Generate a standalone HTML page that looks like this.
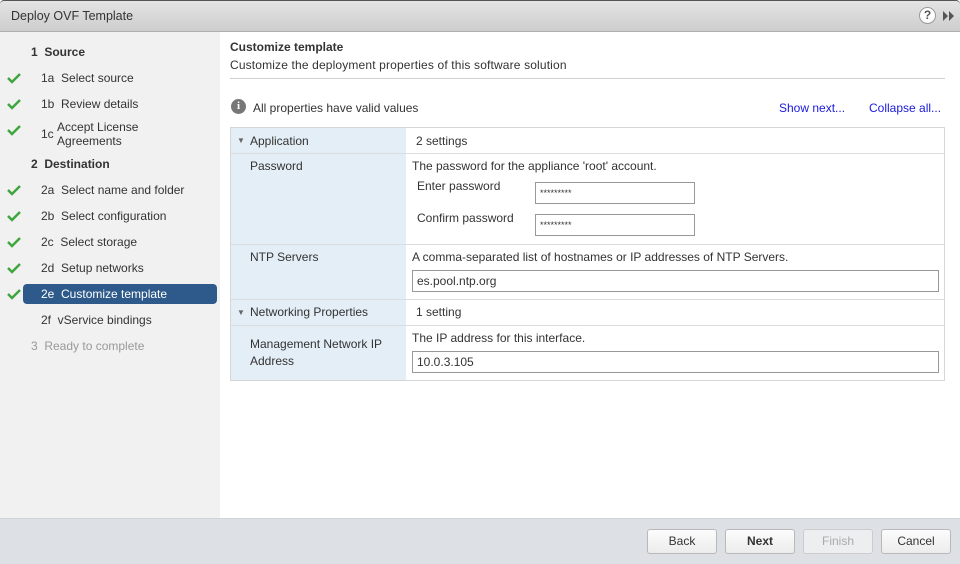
<!DOCTYPE html><html><head><style>
*{box-sizing:border-box;margin:0;padding:0}
body{width:960px;height:564px;overflow:hidden;font-family:"Liberation Sans",sans-serif;font-size:12px;color:#333;background:#fff;position:relative}
.abs{position:absolute}
.title{left:0;top:0;width:960px;height:32px;background:linear-gradient(#e4e4e4,#cdcdcd);border-bottom:1px solid #b0b0b0;border-top:1px solid #555;border-radius:4px 4px 0 0}
.left{left:0;top:32px;width:220px;height:486px;background:#f1f1f1}
.nav{position:absolute;left:0;height:20px;line-height:20px;font-size:12px;color:#333}
.chk{position:absolute;left:7px;width:14px;height:12px}
.foot{left:0;top:518px;width:960px;height:46px;background:#dde1e6;border-top:1px solid #cfd4da}
.btn{position:absolute;top:529px;height:25px;width:70px;border:1px solid #b8b8b8;border-radius:3px;background:linear-gradient(#fcfcfc,#ececec);text-align:center;line-height:23px;font-size:12px;color:#333}
.tbl{left:230px;top:127px;width:715px;height:254px;border:1px solid #d6d6d6}
.lc{position:absolute;left:0;width:175px;background:#e4eef6}
.row{position:absolute;left:0;width:713px;border-top:1px solid #dcdcdc}
.inp{position:absolute;height:22px;border:1px solid #999;background:#fff;padding-left:4px;font-size:12px;line-height:20px}
</style></head><body>
<div class="abs title"><div class="abs" style="left:11px;top:8px;font-size:12.5px;color:#333">Deploy OVF Template</div>
<div class="abs" style="left:919px;top:6px;width:17px;height:17px;border-radius:50%;border:1px solid #999;background:#fff;text-align:center;font-size:12px;font-weight:bold;line-height:15px;color:#555">?</div>
<svg class="abs" style="left:943px;top:10px" width="12" height="10"><path d="M0 0L5 5L0 10Z M6 0L11 5L6 10Z" fill="#555"/></svg></div>
<div class="abs left">
<div class="nav" style="top:10px;left:31px;font-weight:bold">1&nbsp; Source</div>
<svg class="chk" style="top:40px"><path d="M1 6L5 10L13 2" stroke="#3fa63f" stroke-width="2.5" fill="none"/></svg><div class="nav" style="top:36px;left:41px">1a&nbsp; Select source</div>
<svg class="chk" style="top:66px"><path d="M1 6L5 10L13 2" stroke="#3fa63f" stroke-width="2.5" fill="none"/></svg><div class="nav" style="top:62px;left:41px">1b&nbsp; Review details</div>
<svg class="chk" style="top:92px"><path d="M1 6L5 10L13 2" stroke="#3fa63f" stroke-width="2.5" fill="none"/></svg><div class="nav" style="top:88px;left:41px;line-height:14px;height:30px"><span style="display:inline-block;vertical-align:top;margin-top:7px">1c</span> <span style="display:inline-block">Accept License<br>Agreements</span></div>
<div class="nav" style="top:122px;left:31px;font-weight:bold">2&nbsp; Destination</div>
<svg class="chk" style="top:152px"><path d="M1 6L5 10L13 2" stroke="#3fa63f" stroke-width="2.5" fill="none"/></svg><div class="nav" style="top:148px;left:41px">2a&nbsp; Select name and folder</div>
<svg class="chk" style="top:178px"><path d="M1 6L5 10L13 2" stroke="#3fa63f" stroke-width="2.5" fill="none"/></svg><div class="nav" style="top:174px;left:41px">2b&nbsp; Select configuration</div>
<svg class="chk" style="top:204px"><path d="M1 6L5 10L13 2" stroke="#3fa63f" stroke-width="2.5" fill="none"/></svg><div class="nav" style="top:200px;left:41px">2c&nbsp; Select storage</div>
<svg class="chk" style="top:230px"><path d="M1 6L5 10L13 2" stroke="#3fa63f" stroke-width="2.5" fill="none"/></svg><div class="nav" style="top:226px;left:41px">2d&nbsp; Setup networks</div>
<div class="abs" style="left:23px;top:252px;width:194px;height:20px;background:#2d5a8a;border-radius:4px"></div>
<svg class="chk" style="top:256px"><path d="M1 6L5 10L13 2" stroke="#3fa63f" stroke-width="2.5" fill="none"/></svg><div class="nav" style="top:252px;left:41px;color:#fff">2e&nbsp; Customize template</div>
<div class="nav" style="top:278px;left:41px">2f&nbsp; vService bindings</div>
<div class="nav" style="top:304px;left:31px;color:#999">3&nbsp; Ready to complete</div>
</div>
<div class="abs" style="left:230px;top:40px;font-weight:bold;font-size:12px">Customize template</div>
<div class="abs" style="left:230px;top:58px;letter-spacing:0.15px">Customize the deployment properties of this software solution</div>
<div class="abs" style="left:230px;top:78px;width:715px;border-top:1px solid #d0d0d0"></div>
<div class="abs" style="left:231px;top:99px;width:15px;height:15px;border-radius:50%;background:#777;color:#fff;font-size:11px;font-weight:bold;text-align:center;line-height:15px;font-family:'Liberation Serif',serif">i</div>
<div class="abs" style="left:253px;top:101px">All properties have valid values</div>
<div class="abs" style="left:779px;top:101px;color:#1a1ad8">Show next...</div>
<div class="abs" style="left:869px;top:101px;color:#1a1ad8">Collapse all...</div>
<div class="abs tbl">
<div class="lc" style="top:0;height:252px"></div>
<div class="abs" style="left:6px;top:8px;font-size:8px;color:#666">▼</div>
<div class="abs" style="left:19px;top:6px">Application</div><div class="abs" style="left:185px;top:6px">2 settings</div>
<div class="row" style="top:25px"></div>
<div class="abs" style="left:19px;top:31px">Password</div>
<div class="abs" style="left:181px;top:31px">The password for the appliance 'root' account.</div>
<div class="abs" style="left:186px;top:51px">Enter password</div><div class="inp" style="left:304px;top:54px;width:160px;font-size:9px">*********</div>
<div class="abs" style="left:186px;top:83px">Confirm password</div><div class="inp" style="left:304px;top:86px;width:160px;font-size:9px">*********</div>
<div class="row" style="top:116px"></div>
<div class="abs" style="left:19px;top:122px">NTP Servers</div>
<div class="abs" style="left:181px;top:122px">A comma-separated list of hostnames or IP addresses of NTP Servers.</div>
<div class="inp" style="left:181px;top:142px;width:527px">es.pool.ntp.org</div>
<div class="row" style="top:171px"></div>
<div class="abs" style="left:6px;top:180px;font-size:8px;color:#666">▼</div>
<div class="abs" style="left:19px;top:177px">Networking Properties</div><div class="abs" style="left:185px;top:177px">1 setting</div>
<div class="row" style="top:197px"></div>
<div class="abs" style="left:19px;top:208px;line-height:17px">Management Network IP<br>Address</div>
<div class="abs" style="left:181px;top:203px">The IP address for this interface.</div>
<div class="inp" style="left:181px;top:223px;width:527px">10.0.3.105</div>
</div>
<div class="abs foot"></div>
<div class="btn" style="left:647px">Back</div>
<div class="btn" style="left:725px;font-weight:bold">Next</div>
<div class="btn" style="left:803px;color:#aaa;border-color:#ccc;background:#eceef0">Finish</div>
<div class="btn" style="left:881px">Cancel</div>
</body></html>
